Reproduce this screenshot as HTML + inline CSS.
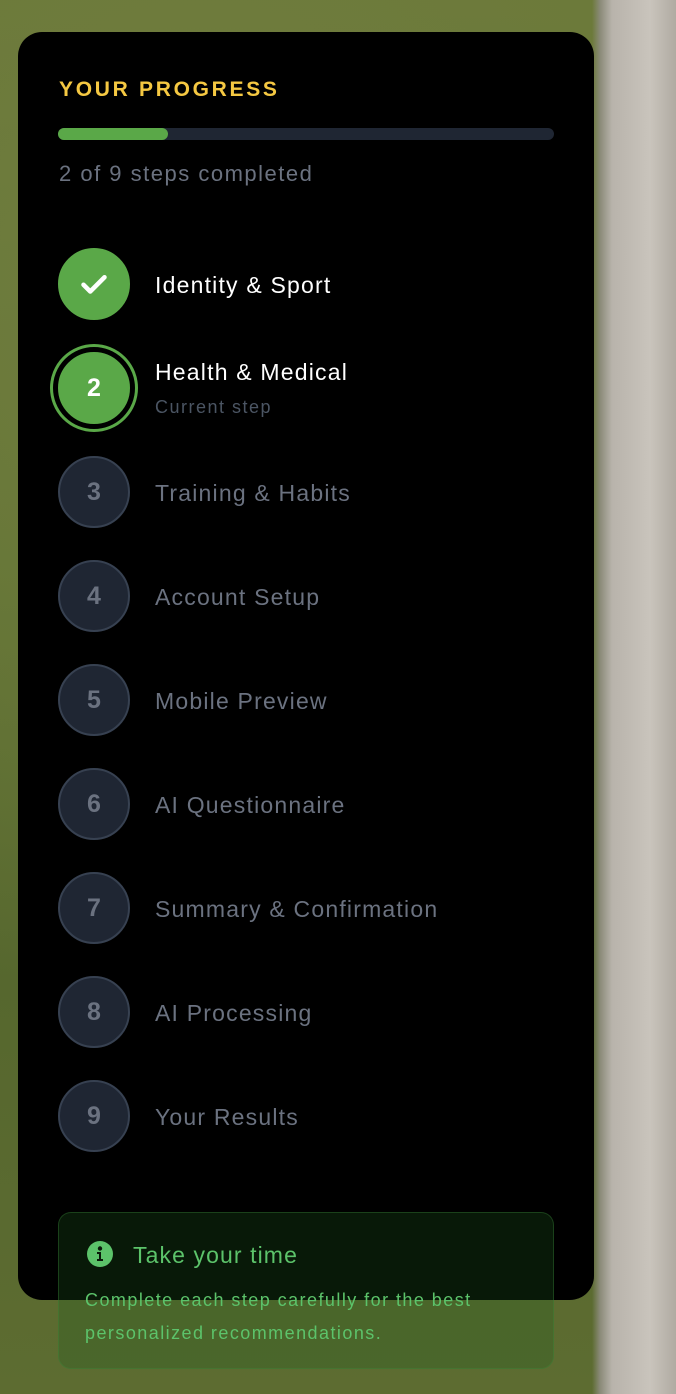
<!DOCTYPE html>
<html><head><meta charset="utf-8"><style>
*{margin:0;padding:0;box-sizing:border-box}
html,body{width:676px;height:1394px;overflow:hidden}
body{font-family:"Liberation Sans",sans-serif;position:relative;
background:
linear-gradient(90deg,rgba(0,0,0,0) 0,rgba(0,0,0,0) 592px,#8a8a78 600px,#b8b3ab 612px,#c9c4bc 650px,#b0aba2 676px),
radial-gradient(circle at 30% 20%,#6f7d3e,transparent 60%),
linear-gradient(180deg,#6b7838 0,#617233 40%,#56672e 70%,#5d6c31 100%);}
.card{position:absolute;left:18px;top:32px;width:576px;height:1268px;background:#000;border-radius:24px}
.t{position:absolute;white-space:nowrap}
.title{left:59px;top:78px;color:#f5c842;font-weight:bold;font-size:21px;letter-spacing:2.7px}
.bar{position:absolute;left:58px;top:128px;width:496px;height:12px;border-radius:6px;background:#1f2633}
.fill{position:absolute;left:0;top:0;width:110px;height:12px;border-radius:6px;background:#5aa848}
.sub{left:59px;top:161px;color:#6b7280;font-size:22px;letter-spacing:1.5px}
.c{position:absolute;left:58px;width:72px;height:72px;border-radius:50%;background:#1f2633;border:2px solid #374151;color:#6b7280;font-weight:bold;font-size:25px;text-align:center;line-height:68px}
.lab{position:absolute;left:155px;color:#6b7280;font-size:23px;letter-spacing:1.2px;white-space:nowrap}
.info{position:absolute;left:58px;top:1212px;width:496px;height:157px;border-radius:13px;background:rgba(30,90,30,0.28);border:1.5px solid rgba(60,140,60,0.35)}
</style></head><body>
<div class="card"></div>
<div class="t title">YOUR PROGRESS</div>
<div class="bar"><div class="fill"></div></div>
<div class="t sub">2 of 9 steps completed</div>

<div class="c" style="top:248px;background:#5aa848;border-color:#5aa848">
<svg width="36" height="36" viewBox="0 0 24 24" style="margin-top:16px"><path d="M5 12.5l4.5 4.5L19 7.5" fill="none" stroke="#fff" stroke-width="3" stroke-linecap="round" stroke-linejoin="round"/></svg></div>
<div class="lab" style="top:272px;color:#fff">Identity &amp; Sport</div>

<div style="position:absolute;left:50px;top:344px;width:88px;height:88px;border-radius:50%;border:3px solid #5aa848"></div>
<div class="c" style="top:352px;background:#5aa848;border-color:#5aa848;color:#fff">2</div>
<div class="lab" style="top:359px;color:#fff">Health &amp; Medical</div>
<div class="lab" style="top:397px;font-size:18px;letter-spacing:1.5px;color:#4b5563">Current step</div>

<div class="c" style="top:456px">3</div><div class="lab" style="top:480px">Training &amp; Habits</div>
<div class="c" style="top:560px">4</div><div class="lab" style="top:584px">Account Setup</div>
<div class="c" style="top:664px">5</div><div class="lab" style="top:688px">Mobile Preview</div>
<div class="c" style="top:768px">6</div><div class="lab" style="top:792px">AI Questionnaire</div>
<div class="c" style="top:872px">7</div><div class="lab" style="top:896px">Summary &amp; Confirmation</div>
<div class="c" style="top:976px">8</div><div class="lab" style="top:1000px">AI Processing</div>
<div class="c" style="top:1080px">9</div><div class="lab" style="top:1104px">Your Results</div>

<div class="info"></div>
<svg style="position:absolute;left:87px;top:1241px" width="26" height="26" viewBox="0 0 26 26"><circle cx="13" cy="13" r="13" fill="#5cc36a"/><circle cx="13" cy="7.5" r="2.2" fill="#0a1a0a"/><path d="M10 11h4v7h2v2h-6v-2h2v-5h-2z" fill="#0a1a0a"/></svg>
<div class="t" style="left:133px;top:1242px;color:#5cc36a;font-size:23px;letter-spacing:1.1px">Take your time</div>
<div class="t" style="left:85px;top:1284px;color:#5cc36a;font-size:18px;line-height:33px;letter-spacing:1.45px">Complete each step carefully for the best<br>personalized recommendations.</div>
</body></html>
